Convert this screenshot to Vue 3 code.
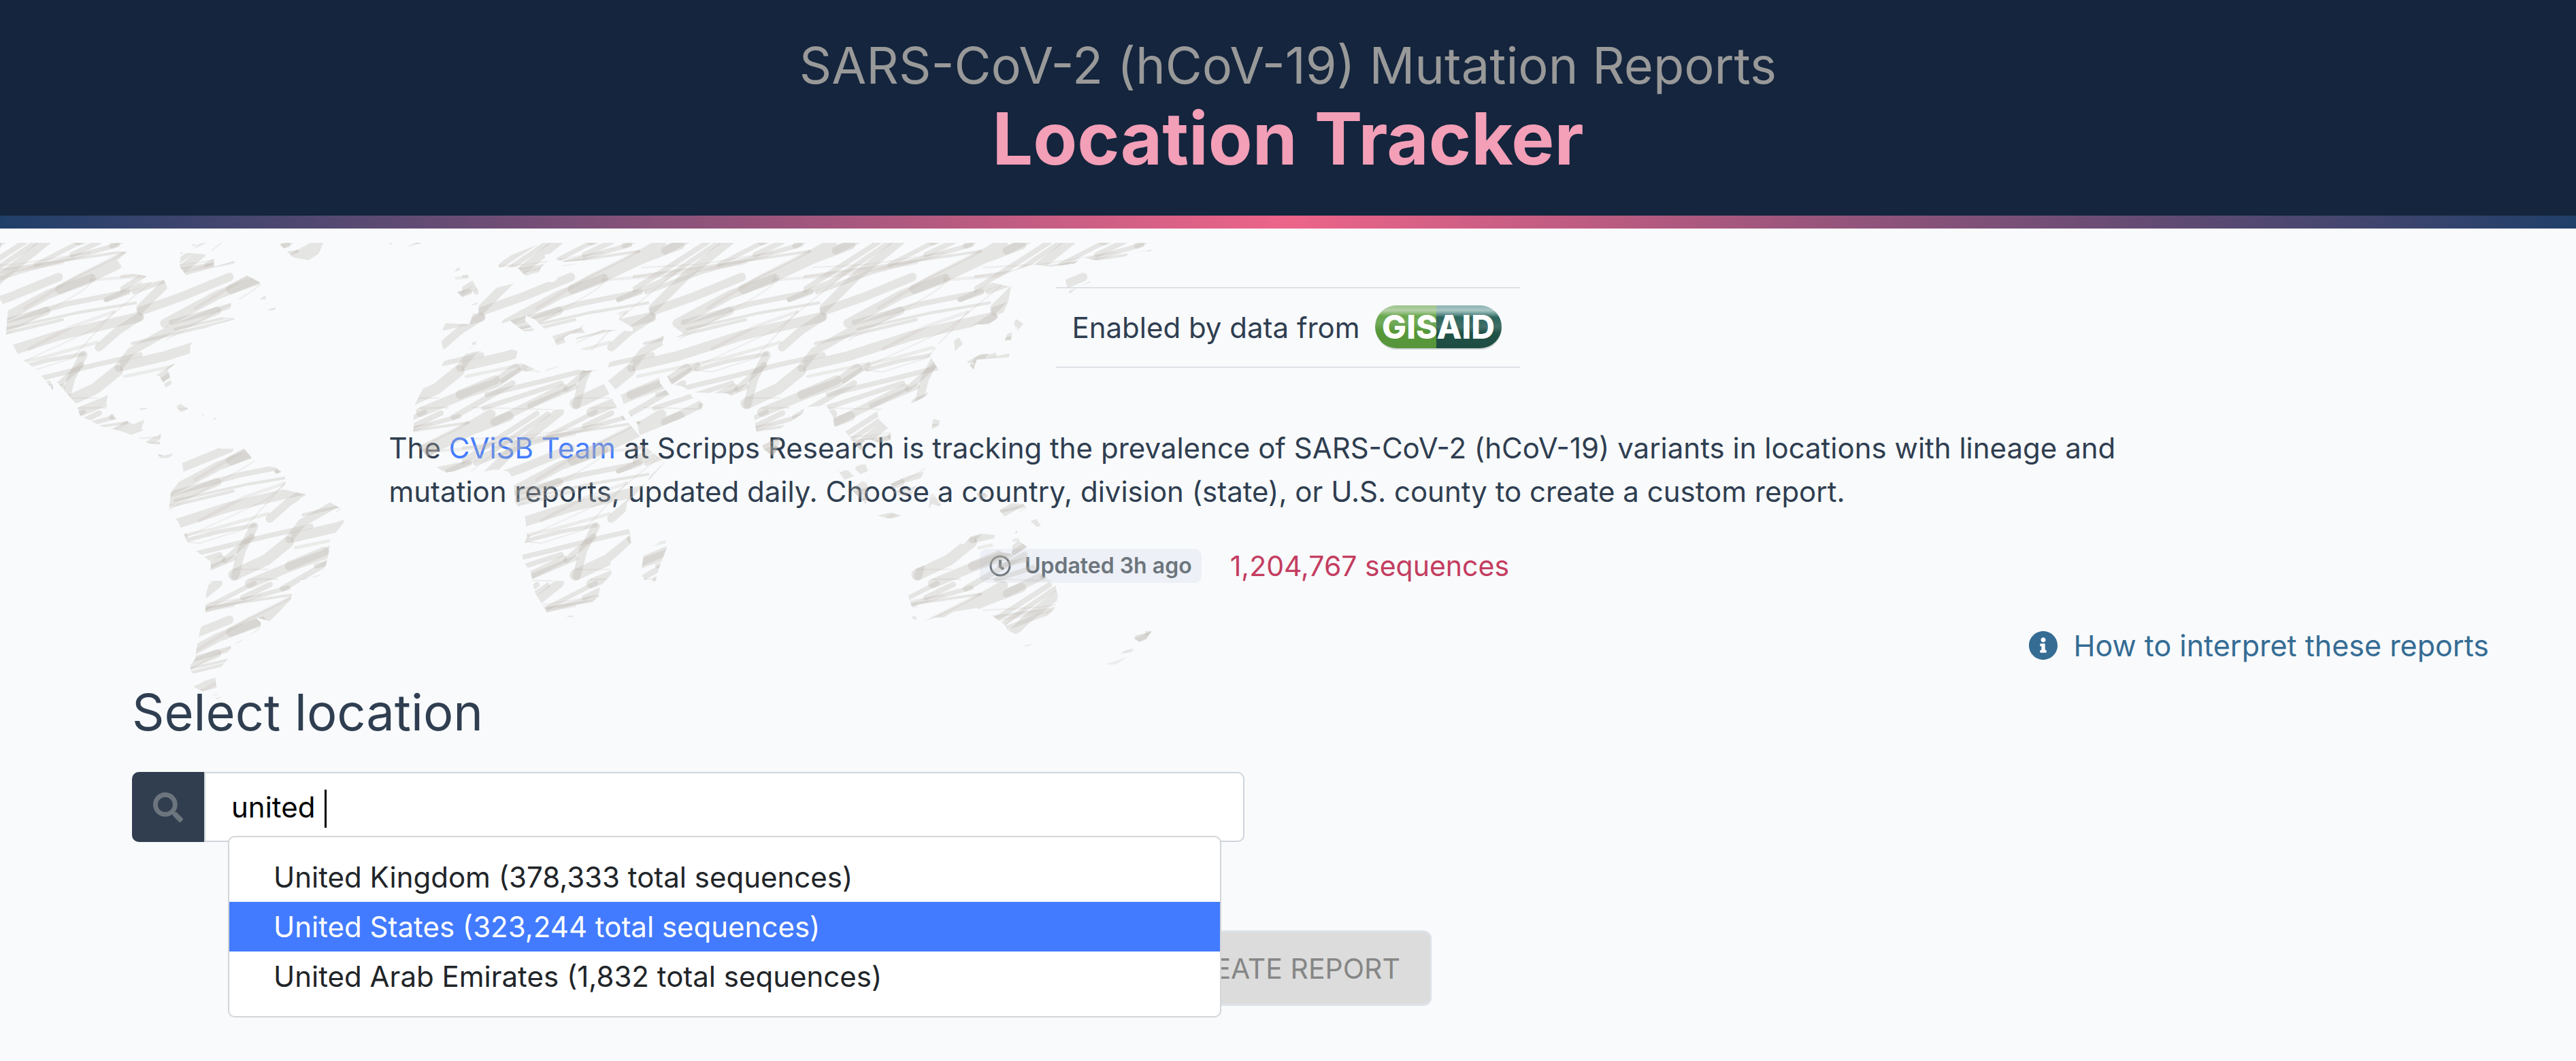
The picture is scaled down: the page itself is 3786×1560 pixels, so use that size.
<script setup>
import { ref } from 'vue'

const query = ref('united ')
const active = ref(1)
const results = [
  { name: 'United Kingdom', total: '378,333' },
  { name: 'United States', total: '323,244' },
  { name: 'United Arab Emirates', total: '1,832' },
]

// Brush strokes of one hatch tile: path, width, opacity
const strokes = [
  ['M880 20L720 112L487 225L640 165L800 90L960 30', 42, 0.3],
  ['M430 10L230 170L90 310', 40, 0.3],
  ['M90 322L260 262L480 172', 38, 0.3],
  ['M195 376L430 250L625 178', 40, 0.3],
  ['M-8 568L200 520L480 430L835 348', 44, 0.3],
  ['M835 348L740 410L658 482', 36, 0.3],
  ['M745 572L800 500L960 410L1180 320', 36, 0.3],
  ['M505 735L535 620L590 515', 36, 0.3],
  ['M590 512L430 540L280 580', 18, 0.3],
  ['M460 665L580 560', 26, 0.3],
  ['M740 585L640 665L500 730', 50, 0.3],
  ['M570 768L760 690L900 640L990 575', 42, 0.3],
  ['M745 690L900 625', 40, 0.3],
  ['M930 630L1040 560', 22, 0.3],
  ['M850 750L1190 640', 22, 0.3],
  ['M895 812L1060 730L1200 660', 34, 0.3],
  ['M660 772L540 830', 24, 0.3],
  ['M716 790L976 640', 26, 0.3],
  ['M225 372L520 290L785 238L690 270', 24, 0.3],
  ['M690 272L880 190L1130 20', 22, 0.3],
  ['M820 286L560 330L240 402', 13, 0.3],
  ['M0 230L330 18', 24, 0.3],
  ['M60 238L300 150L560 80L740 30', 20, 0.3],
  ['M380 118L590 10', 20, 0.3],
  ['M0 170L300 130L500 100L780 58', 12, 0.3],
  ['M840 515L640 560L400 620L110 690', 22, 0.3],
  ['M300 740L500 655', 24, 0.3],
  ['M650 460L400 530L20 610', 15, 0.22],
  ['M805 465L1000 420L1250 360', 14, 0.3],
  ['M40 130L300 115L620 64', 7, 0.18],
  ['M620 185L900 165L1250 110', 13, 0.18],
  ['M780 58L560 170L330 310', 14, 0.18],
  ['M628 158C630 210 600 220 540 260L200 450', 6, 0.18],
  ['M725 325L540 390L350 490', 15, 0.18],
  ['M725 325L540 530L350 590L250 580', 6, 0.2],
  ['M980 120L640 400L250 580', 6, 0.18],
  ['M50 748L400 757', 6, 0.2],
  ['M500 706L650 706', 6, 0.2],
  ['M570 750L690 748', 8, 0.2],
]
const offsets = [-2, -1, 0].flatMap((i) => [-1, 0].map((j) => [i * 753, j * 756]))
</script>

<template>
  <div class="page">
    <header class="masthead">
      <h1>
        <span class="kicker">SARS-CoV-2 (hCoV-19) Mutation Reports</span>
        <span class="title">Location Tracker</span>
      </h1>
    </header>

    <main>
      <svg class="map" width="1720" height="680" viewBox="0 27 1720 680" aria-hidden="true">
        <defs>
          <pattern id="hatch" x="930" y="20" width="251" height="252" patternUnits="userSpaceOnUse" viewBox="0 0 753 756">
            <g v-for="(o, n) in offsets" :key="n" :transform="`translate(${o[0]} ${o[1]})`">
              <path
                v-for="(s, k) in strokes"
                :key="k"
                :d="s[0]"
                :stroke-width="s[1]"
                :stroke-opacity="s[2]"
                fill="none"
                stroke="#bcb4a9"
                stroke-linecap="round"
                stroke-linejoin="round"
              />
            </g>
          </pattern>
          <clipPath id="land">
            <path
              transform="scale(0.574 0.4592)"
              d="M0 59H340L285 85L325 88L300 115L312 135L290 160L340 158L375 165L360 190L420 178L430 208L470 170L550 135L598 118L635 165L665 185L680 225L640 238L590 240L592 262L570 300L625 295L580 312L540 325L500 350L487 390V415L455 440L430 465L440 510L425 522L408 485L375 480L355 492L300 490L278 530L272 575L295 620L325 628L340 640L370 625L362 655L400 680L413 668L408 705L378 700L350 680L310 662L262 648L205 612L195 575L150 510L130 490L136 515L135 530L110 490L88 460L50 425L35 390L15 355L20 280L0 240Z
              M463 90L520 95L548 112V135L478 165L460 135ZM490 65L530 59L500 75ZM540 85L565 59H590L580 85ZM712 59H828L815 95L790 115L750 105ZM997 59H1080L1035 75L1000 72Z
              M685 272L705 265L706 282ZM665 240L680 225V240ZM345 590L378 588L343 605ZM425 572L437 568L430 576ZM448 575H462L482 590L470 602L460 598ZM515 608L525 610L520 612ZM545 620L558 620L548 626ZM402 735L420 740L455 730L430 748H412Z
              M465 755L505 722L555 708L565 718H625L660 770L705 778L728 800L732 825L725 848L785 865L765 880L835 882L880 915V955L845 1010L842 1050L835 1090L818 1125L770 1140L748 1175L745 1200L715 1240L690 1270L655 1258L668 1275L665 1300L630 1318L615 1340L590 1345L592 1358L570 1385H588L550 1440L552 1460L555 1485L518 1495L495 1480L520 1465L488 1430V1412L500 1390L503 1360L512 1300L525 1255L528 1180L538 1140L540 1080L485 1030L455 950L432 920L437 860L460 820L470 790ZM535 1495L572 1508L555 1522Z
              M1135 440L1160 425L1215 408L1300 397L1325 405L1320 435L1390 475L1415 450L1437 458L1500 468L1560 465L1546 510L1586 600L1636 675L1650 710L1703 760L1661 820L1606 890L1599 940L1611 975L1616 1020L1586 1055L1563 1080L1566 1120L1536 1160L1533 1190L1500 1230L1470 1257H1430L1408 1268L1397 1235L1370 1180L1358 1110L1340 1080L1335 1040L1350 1000L1345 940L1320 890L1315 830L1310 805L1300 790L1265 785L1225 795L1190 785L1140 795L1110 770L1085 730L1055 690L1060 640L1057 590L1085 520L1125 480Z"
            />
            <path
              transform="translate(600 20) scale(0.3333)"
              clip-rule="evenodd"
              d="M655 60L720 20H1562V755H1480L1450 720L1410 685H1360L1250 680L1210 655L1160 645L1140 605H1105L1110 640L1160 700L1205 703L1240 675L1250 700L1285 718L1300 735L1290 760L1020 870L1010 820L955 750L940 700L890 640L850 600L855 585L878 572L905 510L875 490L800 497L765 492L740 460V440L820 417L860 405H905L940 408L990 412V395L930 360V335L860 330L810 335L765 398L780 418L715 422L685 440L700 475L662 488L640 440L600 400L560 360L520 342L515 365L557 405L540 412H510L475 385L450 365L385 385L350 405L315 420L295 470L270 492L155 490L147 465L153 400L165 376L270 380L285 335L310 330V300L345 255L385 220L480 197L600 192L640 195L655 185V155L685 120L770 108V98L690 105L655 95Z
              M1090 348L1165 345L1158 385L1215 420L1185 437L1200 455L1190 490L1140 488L1120 465L1128 430L1108 402Z
              M398 118L440 80L590 22L720 20L665 60L600 75L615 103L585 130L575 155L520 168L500 150L480 128L400 130Z
              M218 128L265 160V175L285 190L310 235V250L245 267L215 238L240 215L205 180L205 150ZM155 235L190 230L157 243ZM270 300L305 282V293Z"
            />
            <path
              transform="translate(850 0) scale(0.574 0.4592)"
              d="M400 59H1480L1465 85L1410 90L1395 115L1350 122L1290 105L1270 125L1210 135L1165 128L1110 150L1055 185L1108 200L1100 250L1085 290L1050 320H1020L975 345L945 365L920 385L890 375L918 398L900 420L922 465L920 490L890 550L855 572L830 585H785L765 600L770 625L800 660V690L770 700L750 690L735 690L725 705L745 745L730 735L700 690L685 665L655 645L652 615L635 580L580 585L575 605L520 650L515 700L500 745L475 720L455 660L448 595H423L400 560Z
              M1290 150L1320 148L1310 185L1280 200L1258 222L1247 180L1262 148ZM1120 302L1140 318L1125 338L1112 325ZM1110 345L1108 370L1092 372L1098 350ZM1105 390L1103 425L1020 433L1012 465L995 440L1030 415H1060ZM962 370L975 362L992 400L965 418ZM908 622L926 628L922 645L905 655Z
              M218 1000L228 1030L205 1105L198 1143L175 1152L160 1115L170 1040L200 1025ZM665 788L690 787L705 805L740 830V885L735 895L700 850ZM710 770L735 768L742 790L722 800L710 785ZM765 932L800 922L833 935V944L790 940ZM800 830L890 778L870 830L850 870L810 865ZM875 850L928 835L905 855L932 905L905 895L897 912L900 870ZM1020 860H1040L1070 890L1140 895L1152 915L1105 958L1075 910L1030 888ZM1158 950L1172 943L1188 970H1175ZM515 765L530 762L520 773Z
              M840 1140L850 1108L890 1090L925 1065L935 1045L965 1015L985 1025L1005 1000L1035 990L1067 995L1060 1025L1085 1050L1110 1055L1113 1000L1122 978L1130 1015L1152 1035L1150 1065L1185 1120L1220 1150L1228 1190L1220 1230L1190 1265L1120 1312L1100 1300L1090 1280L1050 1245L1020 1228L960 1240L935 1258H915L882 1272L855 1262L858 1240L845 1190Z
              M1153 1310L1195 1285L1158 1320ZM1142 1348L1168 1342L1145 1352ZM1433 1300L1468 1303L1445 1345L1423 1325ZM1355 1400L1400 1365L1425 1350L1415 1375L1380 1408L1355 1410Z"
            />
          </clipPath>
        </defs>
        <rect y="27" width="1720" height="680" fill="url(#hatch)" clip-path="url(#land)" />
      </svg>

      <div class="source">
        <span>Enabled by data from</span>
        <a href="https://www.gisaid.org/" aria-label="GISAID">
          <svg class="gisaid" width="190" height="70" viewBox="0 0 190 70">
            <defs>
              <linearGradient id="lime" x2="0" y2="1">
                <stop offset="0" stop-color="#9cc389" />
                <stop offset=".12" stop-color="#b4d0a8" />
                <stop offset=".25" stop-color="#68a84b" />
                <stop offset=".4" stop-color="#72ab5c" />
                <stop offset=".6" stop-color="#579838" />
                <stop offset="1" stop-color="#57953b" />
              </linearGradient>
              <linearGradient id="teal" x2="0" y2="1">
                <stop offset="0" stop-color="#8db3b0" />
                <stop offset=".12" stop-color="#a9c8c6" />
                <stop offset=".28" stop-color="#2a655d" />
                <stop offset=".5" stop-color="#436f67" />
                <stop offset=".65" stop-color="#1f5147" />
                <stop offset="1" stop-color="#1e4c42" />
              </linearGradient>
            </defs>
            <rect x="1" y="4" width="185" height="63" rx="31" fill="#1b2b2b" opacity=".18" />
            <path d="M91 2H31.500a31.500 31.500 0 0 0 0 63H91Z" fill="url(#lime)" />
            <path d="M90 2H154.500a31.500 31.500 0 0 1 0 63H90Z" fill="url(#teal)" />
            <text x="93" y="51" text-anchor="middle">GISAID</text>
          </svg>
        </a>
      </div>

      <p class="intro">
        The <a href="https://cvisb.org/">CViSB Team</a> at Scripps Research is tracking the prevalence of SARS-CoV-2 (hCoV-19) variants in locations with lineage and mutation reports, updated daily. Choose a country, division (state), or U.S. county to create a custom report.
      </p>

      <div class="status">
        <span class="updated">
          <svg width="32" height="32" viewBox="0 0 32 32" fill="none" stroke="currentColor" aria-hidden="true">
            <circle cx="16" cy="16" r="14" stroke-width="3" />
            <path d="M16 7V17L21 21" stroke-width="4" />
          </svg>
          Updated 3h ago
        </span>
        <span class="count">1,204,767 sequences</span>
      </div>

      <a class="help" href="#methods">
        <svg width="42" height="42" viewBox="8 8 496 496" aria-hidden="true">
          <path
            fill="currentColor"
            d="M256 8C119.043 8 8 119.083 8 256c0 136.997 111.043 248 248 248s248-111.003 248-248C504 119.083 392.957 8 256 8zm0 110c23.196 0 42 18.804 42 42s-18.804 42-42 42-42-18.804-42-42 18.804-42 42-42zm56 254c0 6.627-5.373 12-12 12h-88c-6.627 0-12-5.373-12-12v-24c0-6.627 5.373-12 12-12h12v-64h-12c-6.627 0-12-5.373-12-12v-24c0-6.627 5.373-12 12-12h64c6.627 0 12 5.373 12 12v100h12c6.627 0 12 5.373 12 12v24z"
          />
        </svg>
        How to interpret these reports
      </a>

      <form class="finder" @submit.prevent>
        <label for="location">Select location</label>
        <div class="search">
          <span class="prefix">
            <svg width="44" height="44" viewBox="0 0 512 512" aria-hidden="true">
              <path
                fill="currentColor"
                d="M505 442.700L405.300 343c-4.500-4.500-10.600-7-17-7H372c27.600-35.300 44-79.700 44-128C416 93.100 322.900 0 208 0S0 93.100 0 208s93.100 208 208 208c48.300 0 92.700-16.400 128-44v16.300c0 6.400 2.500 12.500 7 17l99.700 99.700c9.400 9.400 24.600 9.400 33.900 0l28.300-28.300c9.400-9.400 9.400-24.600.1-34zM208 336c-70.700 0-128-57.200-128-128 0-70.700 57.200-128 128-128 70.700 0 128 57.200 128 128 0 70.700-57.200 128-128 128z"
              />
            </svg>
          </span>
          <input id="location" v-model="query" type="text" autocomplete="off" />
          <span class="caret"></span>
          <ul class="menu">
            <li v-for="(r, i) in results" :key="r.name">
              <button type="button" :class="{ active: i === active }" @mouseenter="active = i">
                {{ r.name }} ({{ r.total }} total sequences)
              </button>
            </li>
          </ul>
        </div>
        <button class="create" type="submit" disabled>CREATE REPORT</button>
      </form>
    </main>
  </div>
</template>

<style>
body {
  background: #f8fafc;
}
</style>

<style scoped>
.page {
  min-height: 100vh;
  background: #f8fafc;
  color: #2f3e50;
  font: 400 42px/64px Inter, "Open Sans", sans-serif;
}
.masthead {
  padding: 48px 0 53px;
  background: #14253d;
  text-align: center;
  border-bottom: 19px solid;
  border-image: linear-gradient(90deg, #1f3f69, #ed6489, #1f3f69) 1;
}
h1 {
  margin: 0;
}
h1 span {
  display: block;
}
.kicker {
  font-size: 74px;
  line-height: 96px;
  font-weight: 400;
  color: #999;
}
.title {
  font-size: 106px;
  line-height: 120px;
  font-weight: 700;
  color: #f29fb7;
}
main {
  position: relative;
  display: flex;
  flex-direction: column;
  align-items: center;
  padding: 86px 128px 80px 194px;
}
.map {
  position: absolute;
  top: 21px;
  left: 0;
  z-index: 1;
  pointer-events: none;
}
.source {
  display: flex;
  align-items: center;
  gap: 22px;
  height: 115px;
  margin-right: 66px;
  padding: 0 23px;
  border: solid #dee2e6;
  border-width: 2px 0;
}
.gisaid {
  display: block;
}
.gisaid text {
  font: 800 48px Inter, sans-serif;
  fill: #fff;
}
.intro {
  width: 76.300%;
  margin: 86px 66px 0 0;
}
.intro a {
  color: #427bff;
  text-decoration: none;
}
.status {
  display: flex;
  align-items: center;
  gap: 42px;
  margin: 45px 194px 0 0;
}
.updated {
  display: flex;
  align-items: center;
  gap: 20px;
  height: 50px;
  padding: 0 14px;
  border-radius: 10px;
  background: #edf0f6;
  color: #6c757d;
  font-size: 32px;
  font-weight: 600;
}
.count {
  color: #c43d60;
  font-size: 41px;
}
.help {
  align-self: flex-end;
  display: flex;
  align-items: center;
  gap: 24px;
  margin-top: 53px;
  color: #356c94;
  font-size: 43px;
  text-decoration: none;
}
.finder {
  align-self: stretch;
  display: flex;
  flex-direction: column;
  align-items: center;
  margin-top: 22px;
}
label {
  align-self: flex-start;
  font-size: 74px;
  line-height: 88px;
  font-weight: 400;
}
.search {
  position: relative;
  align-self: flex-start;
  display: flex;
  width: 47.200%;
  height: 103px;
  margin-top: 44px;
}
.prefix {
  display: flex;
  align-items: center;
  justify-content: center;
  width: 106px;
  border-radius: 10px 0 0 10px;
  background: #313e50;
  color: #6c757d;
}
input {
  flex: 1;
  min-width: 0;
  padding: 0 38px;
  border: 2px solid #ced4da;
  border-radius: 0 10px 10px 0;
  background: #fff;
  color: #000;
  font: inherit;
  outline: none;
}
.caret {
  position: absolute;
  left: 283px;
  top: 26px;
  width: 3px;
  height: 56px;
  background: #000;
}
.menu {
  position: absolute;
  z-index: 2;
  top: 94px;
  left: 141px;
  right: 34px;
  margin: 0;
  padding: 22px 0;
  border: 2px solid #d3d5d7;
  border-radius: 10px;
  background: #fff;
  list-style: none;
}
.menu button {
  display: block;
  width: 100%;
  height: 73px;
  padding: 0 65px;
  border: 0;
  background: none;
  color: #212529;
  font: inherit;
  text-align: left;
}
.menu .active {
  background: #427bff;
  color: #fff;
}
.create {
  height: 111px;
  margin: 130px 66px 0 0;
  padding: 0 43px;
  border: 3px solid #dde2e8;
  border-radius: 12px;
  background: #dcdcdc;
  color: #868686;
  font: inherit;
  font-size: 41px;
}
</style>
